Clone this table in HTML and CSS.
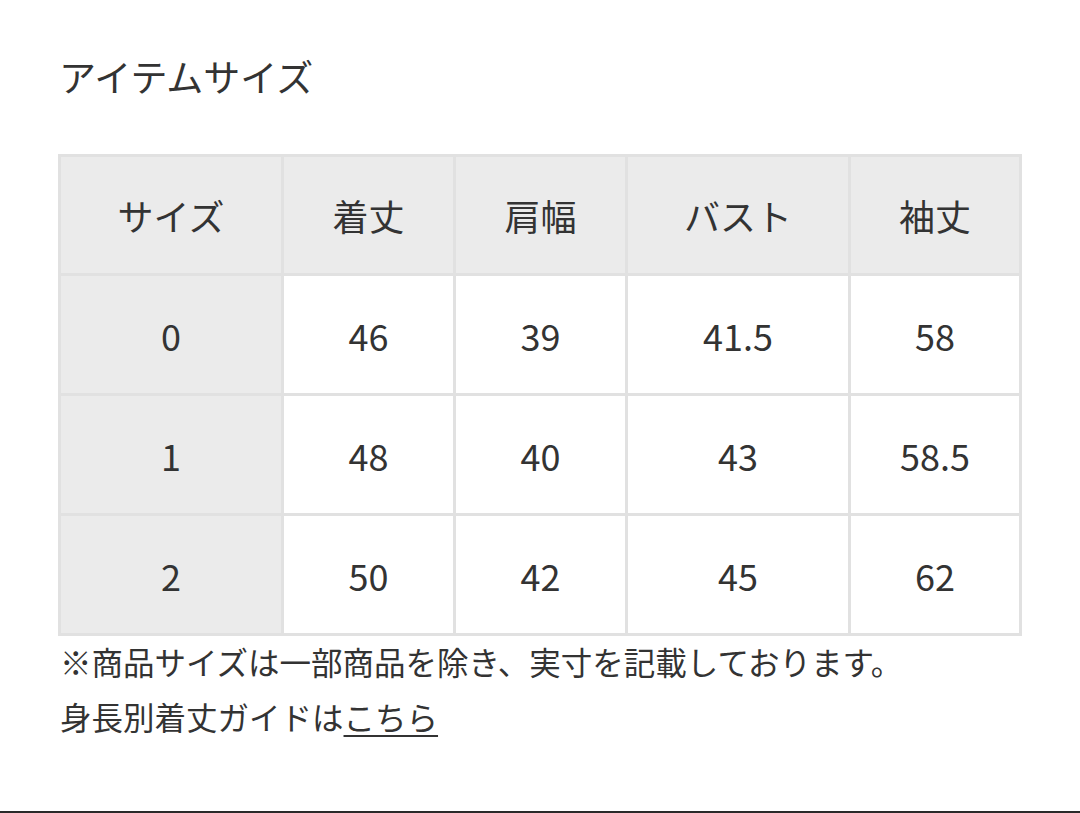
FILE: index.html
```html
<!DOCTYPE html>
<html lang="ja">
<head>
<meta charset="utf-8">
<link rel="stylesheet" href="styles.css">
</head>
<body>
<main class="page">
  <h2 class="title">アイテムサイズ</h2>
  <table class="size-table">
    <colgroup>
      <col class="c-size"><col class="c-narrow"><col class="c-narrow"><col class="c-wide"><col class="c-last">
    </colgroup>
    <thead>
      <tr class="head-row"><th>サイズ</th><th>着丈</th><th>肩幅</th><th>バスト</th><th>袖丈</th></tr>
    </thead>
    <tbody>
      <tr><th>0</th><td>46</td><td>39</td><td>41.5</td><td>58</td></tr>
      <tr><th>1</th><td>48</td><td>40</td><td>43</td><td>58.5</td></tr>
      <tr><th>2</th><td>50</td><td>42</td><td>45</td><td>62</td></tr>
    </tbody>
  </table>
  <p class="note">※商品サイズは一部商品を除き、実寸を記載しております。</p>
  <p class="note">身長別着丈ガイドは<a class="link" href="#">こちら</a></p>
</main>
<div class="rule"></div>
</body>
</html>
```

FILE: styles.css
```css
html, body {
  margin: 0;
  padding: 0;
  background: #fff;
}
body {
  font-family: "Noto Sans CJK JP", "Noto Sans", sans-serif;
  color: #333;
}
.page {
  height: 811px;
  padding: 0 58px;
  box-sizing: border-box;
  overflow: hidden;
}
.title {
  margin: 0;
  padding: 49px 0 0 1px;
  font-size: 37px;
  font-weight: 400;
  line-height: 54px;
  letter-spacing: 0;
}
.size-table {
  margin-top: 51px;
  width: 961px;
  border-collapse: collapse;
  table-layout: fixed;
  border: 3px solid #e1e1e1;
}
.c-size { width: 223px; }
.c-narrow { width: 172px; }
.c-wide { width: 223px; }
.c-last { width: 171px; }
.size-table th,
.size-table td {
  border: 3px solid #e1e1e1;
  text-align: center;
  vertical-align: middle;
  font-size: 36px;
  font-weight: 400;
  padding: 0;
  line-height: 1;
}
.size-table tr { height: 120px; }
.size-table .head-row { height: 119px; }
.size-table thead th { background: #ebebeb; }
.size-table tbody th { background: #ebebeb; }
.size-table td { background: #fff; }
.note {
  margin: 0;
  padding-left: 2px;
  font-size: 31.5px;
  font-weight: 400;
  line-height: 55px;
  white-space: nowrap;
}
.note:first-of-type { margin-top: -2px; }
.link {
  color: #333;
  text-decoration: underline;
  text-decoration-thickness: 2px;
  text-underline-offset: 5px;
}
.rule {
  height: 2px;
  background: #2a2a2a;
}
```
